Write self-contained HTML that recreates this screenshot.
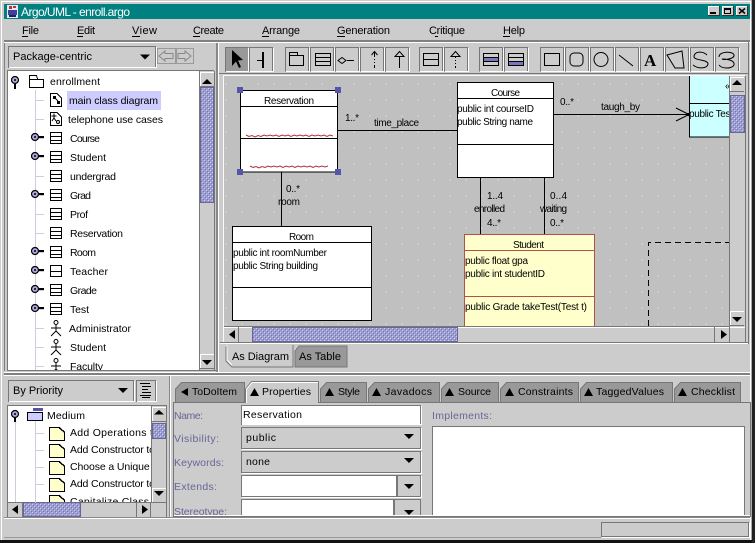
<!DOCTYPE html>
<html><head><meta charset="utf-8"><title>Argo/UML - enroll.argo</title>
<style>
html,body{margin:0;padding:0;background:#ccc;width:755px;height:543px;overflow:hidden}
svg{display:block}
text{font-family:"Liberation Sans",sans-serif;font-size:10.5px;fill:#000}
.c{shape-rendering:crispEdges}
.m{font-size:11px}
.l{fill:#666699}
.d text{font-size:10px}
</style></head><body>
<svg width="755" height="543" viewBox="0 0 755 543" xmlns="http://www.w3.org/2000/svg">
<defs>
<pattern id="hatch" width="4" height="4" patternUnits="userSpaceOnUse"><rect width="4" height="4" fill="#9c9ccf"/><rect x="0" y="0" width="1" height="1" fill="#ccccff"/><rect x="2" y="2" width="1" height="1" fill="#ccccff"/><rect x="1" y="1" width="1" height="1" fill="#7777aa"/><rect x="3" y="3" width="1" height="1" fill="#7777aa"/></pattern>
<pattern id="grid" x="225" y="83" width="16" height="16" patternUnits="userSpaceOnUse"><rect width="16" height="16" fill="#c0c0c0"/><rect x="0" y="0" width="2" height="2" fill="#cbcbcb"/></pattern>
<clipPath id="cd"><rect x="224" y="76" width="505" height="250"/></clipPath>
<clipPath id="ct"><rect x="8" y="72" width="192" height="298"/></clipPath>
<clipPath id="cb"><rect x="8" y="406" width="143" height="96"/></clipPath>
<clipPath id="cs"><rect x="170" y="404" width="580" height="111"/></clipPath>
<g id="btn" class="c"><rect width="24" height="25" fill="#ccc"/><path d="M.5 24V.5H23.5V24.5H.5" fill="none" stroke="#777"/><path d="M1 24.5H24.5V1" fill="none" stroke="#fff"/></g>
<g id="sb" class="c"><rect width="14" height="15" fill="#ccc"/><path d="M.5 15V.5H14" fill="none" stroke="#fff"/><path d="M0 14.5H14" stroke="#777"/></g>
<path id="da" d="M0 0H10L5 5Z"/>
<g id="cls" class="c" fill="none" stroke="#000"><rect x=".5" y=".5" width="11" height="11" fill="#fff"/><path d="M0 4.5H12M0 8.5H12"/></g>
<g id="act" fill="none" stroke="#000"><circle cx="6" cy="2.5" r="2"/><path d="M6 5V11M1 8H11M6 11L1 16M6 11L11 16"/></g>
<g id="key"><circle cx="0" cy="0" r="3.5" fill="#aaaadd" stroke="#000" stroke-width="1.2"/><circle cx="0" cy="0" r="1" fill="#000"/><rect x="4" y="-1" width="5" height="2" fill="#000"/></g>
<g id="note" class="c"><path d="M.5 .5H10.5L15.5 5V13.5H.5Z" fill="#ffffcc" stroke="#000"/><path d="M10 1L15 5" stroke="#000"/></g>
</defs>

<!-- window -->
<rect width="755" height="543" fill="#ccc"/>
<g class="c">
<path d="M.5 543V.5H754" fill="none" stroke="#ccc"/>
<path d="M1 1.5H753M1.5 1V540" stroke="#fff"/>
<rect x="0" y="540" width="755" height="3" fill="#111"/>
<rect x="752" y="0" width="3" height="543" fill="#222"/>
<rect x="750" y="2" width="1" height="538" fill="#fff"/>
<rect x="751" y="0" width="1" height="540" fill="#aaa"/>
<rect x="4" y="4" width="746" height="15" fill="#008080"/>
</g>
<!-- title icon -->
<g class="c"><rect x="7" y="5" width="11" height="13" fill="#e8e8f4"/><rect x="9" y="6" width="3" height="3" fill="#c03030"/><rect x="13" y="6" width="3" height="2" fill="#c03030"/><rect x="8" y="10" width="9" height="5" fill="#4040a0"/><rect x="9" y="15" width="7" height="2" fill="#202060"/></g>
<text x="21" y="16" style="font-size:12px;fill:#fff" textLength="109">Argo/UML - enroll.argo</text>
<!-- window buttons -->
<g class="c">
<rect x="708" y="6" width="12" height="10" fill="#ccc"/><path d="M708 6.5H720M708.5 6V16" stroke="#fff"/><path d="M708 15.5H720M719.5 6V16" stroke="#333"/><rect x="710" y="12" width="6" height="2" fill="#000"/>
<rect x="722" y="6" width="12" height="10" fill="#ccc"/><path d="M722 6.5H734M722.5 6V16" stroke="#fff"/><path d="M722 15.5H734M733.5 6V16" stroke="#333"/><rect x="724.5" y="8.5" width="6" height="5" fill="none" stroke="#000"/><rect x="724" y="8" width="7" height="2" fill="#000"/>
<rect x="736" y="6" width="12" height="10" fill="#ccc"/><path d="M736 6.5H748M736.5 6V16" stroke="#fff"/><path d="M736 15.5H748M747.5 6V16" stroke="#333"/>
</g>
<path d="M739 8.5L745 13.5M745 8.5L739 13.5" stroke="#000" stroke-width="1.5"/>
<!-- menu -->
<text class="m" x="22" y="34" textLength="17">File</text>
<text class="m" x="77" y="34" textLength="18">Edit</text>
<text class="m" x="132" y="34" textLength="25">View</text>
<text class="m" x="193" y="34" textLength="31">Create</text>
<text class="m" x="262" y="34" textLength="38">Arrange</text>
<text class="m" x="337" y="34" textLength="53">Generation</text>
<text class="m" x="429" y="34" textLength="36">Critique</text>
<text class="m" x="503" y="34" textLength="22">Help</text>
<g class="c" fill="#000"><rect x="22" y="36" width="6" height="1"/><rect x="77" y="36" width="6" height="1"/><rect x="132" y="36" width="8" height="1"/><rect x="193" y="36" width="7" height="1"/><rect x="262" y="36" width="7" height="1"/><rect x="337" y="36" width="8" height="1"/><rect x="435" y="36" width="3" height="1"/><rect x="503" y="36" width="7" height="1"/></g>
<g class="c">
<rect x="4" y="40" width="746" height="2" fill="#808080"/>
<rect x="4" y="42" width="746" height="1" fill="#fff"/>
<!-- left pane frame -->
<path d="M4.5 43V371" stroke="#808080"/>
<rect x="216" y="43" width="2" height="329" fill="#888"/>
<rect x="218" y="43" width="1" height="329" fill="#fff"/>
<rect x="4" y="372" width="746" height="1" fill="#fff"/>
<rect x="4" y="373" width="746" height="2" fill="#808080"/>
<rect x="4" y="375" width="746" height="1" fill="#fff"/>
<!-- combo -->
<rect x="8.5" y="46.5" width="147" height="21" fill="#ccc" stroke="#777"/><path d="M9 67.5H156.5V47" fill="none" stroke="#fff"/>
<rect x="157.5" y="48.5" width="18" height="15" fill="#ccc" stroke="#999"/><rect x="176.5" y="48.5" width="17" height="15" fill="#ccc" stroke="#999"/>
</g>
<text x="13" y="60" style="font-size:11px" textLength="79">Package-centric</text>
<use href="#da" x="140" y="54.5"/>
<path d="M159 56L165 51V53.5H173V58.5H165V61Z" fill="none" stroke="#888"/>
<path d="M191 56L185 51V53.5H178V58.5H185V61Z" fill="none" stroke="#888"/>
<!-- tree -->
<g class="c">
<rect x="7" y="71" width="193" height="299" fill="#fff"/>
<path d="M7 70.5H214M7.5 71V370" stroke="#777"/>
<path d="M7 370.5H216" stroke="#777"/>
<path d="M35.5 90V370" stroke="#ccccdd"/>
<path d="M36 100.5H44M36 119.5H44M36 138.5H44M36 157.5H44M36 176.5H44M36 195.5H44M36 214.5H44M36 233.5H44M36 252.5H44M36 271.5H44M36 290.5H44M36 309.5H44M36 328.5H44M36 347.5H44M36 366.5H44" stroke="#ccccdd"/>
<rect x="67" y="91" width="94" height="19" fill="#ccccff"/>
<rect x="29.5" y="79.5" width="14" height="8" fill="#fff" stroke="#000"/><path d="M29.5 79V75.5H36.5L37.5 79" fill="#fff" stroke="#000"/>
</g>
<circle cx="15" cy="80" r="3.5" fill="#aaaadd" stroke="#000" stroke-width="1.2"/><circle cx="15" cy="80" r="1"/><rect x="14" y="84" width="2" height="5"/>
<g clip-path="url(#ct)">
<g class="c">
<path d="M50.5 93.5H57L61.5 98V106.5H50.5Z" fill="#fff" stroke="#000"/><rect x="53" y="96" width="3" height="3" fill="#000"/><rect x="57" y="101" width="3" height="3" fill="#000"/>
<path d="M50.5 112.5H57L61.5 117V125.5H50.5Z" fill="#fff" stroke="#000"/></g>
<path d="M55 98L58 101" stroke="#000"/>
<path d="M54 113.5V118M51.5 116H56.5M54 118L52 121M54 118L56 121" stroke="#000" fill="none"/><circle cx="58" cy="122" r="1.5" fill="none" stroke="#000"/>
<use href="#key" x="35" y="137"/><use href="#key" x="35" y="156"/><use href="#key" x="35" y="194"/><use href="#key" x="35" y="251"/><use href="#key" x="35" y="270"/><use href="#key" x="35" y="289"/><use href="#key" x="35" y="308"/>
<use href="#cls" x="50" y="132"/><use href="#cls" x="50" y="151"/><use href="#cls" x="50" y="170"/><use href="#cls" x="50" y="189"/><use href="#cls" x="50" y="208"/><use href="#cls" x="50" y="227"/><use href="#cls" x="50" y="246"/>
<g class="c" fill="none" stroke="#000"><rect x="50.5" y="265.5" width="11" height="11" fill="#fff"/><path d="M50 271.5H62"/></g>
<use href="#cls" x="50" y="284"/><use href="#cls" x="50" y="303"/>
<use href="#act" x="50" y="320"/><use href="#act" x="50" y="339"/><use href="#act" x="50" y="358"/>
<text x="50" y="85" textLength="50">enrollment</text>
<text x="69" y="104" textLength="89">main class diagram</text>
<text x="68" y="123" textLength="95">telephone use cases</text>
<text x="70" y="142" textLength="30">Course</text>
<text x="70" y="161" textLength="36">Student</text>
<text x="70" y="180" textLength="46">undergrad</text>
<text x="70" y="199" textLength="21">Grad</text>
<text x="70" y="218" textLength="18">Prof</text>
<text x="70" y="237" textLength="53">Reservation</text>
<text x="70" y="256" textLength="26">Room</text>
<text x="70" y="275" textLength="38">Teacher</text>
<text x="70" y="294" textLength="27">Grade</text>
<text x="70" y="313" textLength="19">Test</text>
<text x="69" y="332" textLength="62">Administrator</text>
<text x="70" y="351" textLength="36">Student</text>
<text x="70" y="370" textLength="33">Faculty</text>
</g>
<!-- tree scrollbar -->
<g class="c"><rect x="200" y="72" width="14" height="298" fill="#ccc"/><path d="M199.5 71V370M214.5 71V370" stroke="#777"/>
<use href="#sb" x="200" y="72"/><rect x="200" y="88" width="14" height="115" fill="url(#hatch)"/><rect x="200.5" y="87.5" width="13" height="115" fill="none" stroke="#666699"/>
<use href="#sb" x="200" y="354"/></g>
<path d="M202 84H212L207 79Z"/><use href="#da" x="202" y="360"/>

<!-- toolbar -->
<g class="c"><rect x="225" y="47" width="24" height="25" fill="#999"/><path d="M225.5 72V47.5H248" fill="none" stroke="#777"/><path d="M226 71.5H248.5V48" fill="none" stroke="#fff"/></g>
<use href="#btn" x="249" y="47"/><use href="#btn" x="285" y="47"/><use href="#btn" x="310" y="47"/><use href="#btn" x="335" y="47"/><use href="#btn" x="360" y="47"/><use href="#btn" x="385" y="47"/><use href="#btn" x="419" y="47"/><use href="#btn" x="444" y="47"/><use href="#btn" x="479" y="47"/><use href="#btn" x="504" y="47"/><use href="#btn" x="540" y="47"/><use href="#btn" x="565" y="47"/><use href="#btn" x="590" y="47"/><use href="#btn" x="615" y="47"/><use href="#btn" x="640" y="47"/><use href="#btn" x="665" y="47"/><use href="#btn" x="690" y="47"/><use href="#btn" x="715" y="47"/>
<path d="M232 50L232 66L236 61.5L239 68L241 67L238 60.5L243 60Z" fill="#000"/>
<g class="c"><rect x="484" y="58" width="14" height="3" fill="#7777bb"/><rect x="509" y="62" width="14" height="3" fill="#7777bb"/></g>
<g class="c" fill="none" stroke="#000"><path d="M257 60.5H263M263.5 52V68M262.5 52V68"/>
<path d="M289.5 55.5H303.5V65.5H289.5ZM289.5 55.5V52.5H297.5V55.5"/>
<rect x="315.5" y="53.5" width="15" height="12"/><path d="M315 57.5H331M315 61.5H331"/>
<path d="M347 60.5H354"/>
<rect x="423.5" y="53.5" width="15" height="12"/><path d="M423 59.5H439"/>
<rect x="483.5" y="53.5" width="15" height="12"/><path d="M483 57.5H499M483 61.5H499"/>
<rect x="508.5" y="53.5" width="15" height="12"/><path d="M508 57.5H524M508 61.5H524"/>
<rect x="544.5" y="53.5" width="15" height="12"/>
<path d="M374.5 52V57M374.5 59V60M374.5 62V63M374.5 65V68"/>
<path d="M399.5 57V68"/><path d="M455.5 57V58M455.5 60V61M455.5 63V64M455.5 66V68"/></g>
<g fill="none" stroke="#000">
<path d="M338 60.5L342 57.5L346 60.5L342 63.5Z"/>
<path d="M371.5 55L374.5 51.5L377.5 55"/>
<path d="M395 56.5L399.5 51.5L404 56.5Z"/>
<path d="M451 56.5L455.5 51.5L460 56.5Z"/>
<rect x="570" y="53" width="13" height="13" rx="4"/>
<circle cx="601" cy="59.5" r="7"/>
<path d="M619 55L633 66"/>
<path d="M667 55L682 51L684 68L675 68Z"/>
<path d="M707 55C703 51 695 51 694 56C693 61 708 59 708 64C707 69 698 69 693 65"/>
<path d="M719 57C719 51 733 51 734 55C735 59 724 60 722 59C729 59 735 61 734 65C732 69 722 69 719 65"/>
</g>
<text x="644" y="66" style="font-family:'Liberation Serif',serif;font-weight:bold;font-size:17px">A</text>

<!-- right pane frame -->
<g class="c"><path d="M219 73.5H748" stroke="#777"/><rect x="220" y="74" width="529" height="270" fill="#ccc"/>
<path d="M223.5 75V342M223 75.5H745" stroke="#fff" opacity=".9"/>
<path d="M220 342.5H748" stroke="#777"/><path d="M220 343.5H748" stroke="#fff"/>
<path d="M748.5 42V344" stroke="#777"/></g>
<!-- diagram -->
<rect x="224" y="76" width="505" height="250" fill="url(#grid)" class="c"/>
<g clip-path="url(#cd)" class="d">
<g class="c" stroke="#000" fill="none">
<path d="M337 130.5H457M281.5 172V227M480.5 178V235M544.5 178V235M553 114.5H689"/>
<rect x="240.5" y="90.5" width="97" height="81.5" fill="#fff"/><path d="M241 106.5H337M241 138.5H337"/>
<rect x="457.5" y="82.5" width="96" height="95" fill="#fff"/><path d="M458 98.5H553M458 144.5H553"/>
<rect x="232.5" y="226.5" width="139" height="94" fill="#fff"/><path d="M233 242.5H371M233 287.5H371"/>
<rect x="689.5" y="70.5" width="60" height="66.5" fill="#ccffff"/><path d="M689 103.5H745"/>
<rect x="464.5" y="234.5" width="130" height="100" fill="#ffffcc" stroke="#b05050"/><path d="M465 250.5H594M465 296.5H594" stroke="#b05050"/>
<path d="M648.5 326V242.5H729" stroke-dasharray="6 4"/>
</g>
<path d="M676 108L689 114.5L676 121" fill="none" stroke="#000"/>
<rect x="687" y="113" width="3" height="3"/>
<path d="M246 135l3 1.5 3-1 3 1.5 3-1.5 3 1 3-1.5 3 1 3-1 3 1 3-1 3 1.5 3-1.5 3 1 3-1 3 1.5 3-1.5 3 1 3-1 3 1 3-1 3 1.5 3-1.5 3 1 3-1 3 1 3-1 3 1.5 3-1.5 3 1" fill="none" stroke="#b03040"/>
<path d="M250 166l3 1.5 3-1 3 1.5 3-1.5 3 1 3-1.5 3 1 3-1 3 1 3-1 3 1.5 3-1.5 3 1 3-1 3 1.5 3-1.5 3 1 3-1 3 1 3-1 3 1.5 3-1.5 3 1 3-1 3 1 3-1" fill="none" stroke="#b03040"/>
<text x="264" y="104" textLength="50">Reservation</text>
<text x="345" y="121" textLength="14">1..*</text>
<text x="374" y="126" textLength="45">time_place</text>
<text x="491" y="96" textLength="29">Course</text>
<text x="457" y="112" textLength="77">public int courseID</text>
<text x="457" y="125" textLength="76">public String name</text>
<text x="560" y="105" textLength="14">0..*</text>
<text x="601" y="110" textLength="39">taugh_by</text>
<text x="689" y="117" textLength="44">public Test</text>
<text x="725" y="89">«</text>
<text x="286" y="192" textLength="14">0..*</text>
<text x="278" y="205" textLength="22">room</text>
<text x="289" y="240" textLength="25">Room</text>
<text x="233" y="256" textLength="94">public int roomNumber</text>
<text x="233" y="269" textLength="85">public String building</text>
<text x="487" y="199" textLength="16">1..4</text>
<text x="474" y="212" textLength="31">enrolled</text>
<text x="487" y="226" textLength="14">4..*</text>
<text x="550" y="199" textLength="17">0..4</text>
<text x="540" y="212" textLength="27">waiting</text>
<text x="550" y="226" textLength="14">0..*</text>
<text x="513" y="248" textLength="31">Student</text>
<text x="465" y="264" textLength="63">public float gpa</text>
<text x="465" y="277" textLength="80">public int studentID</text>
<text x="465" y="310" textLength="122">public Grade takeTest(Test t)</text>
</g>
<g class="c" fill="#5555aa"><rect x="237" y="87" width="6" height="6"/><rect x="335" y="87" width="6" height="6"/><rect x="237" y="169" width="6" height="6"/><rect x="335" y="169" width="6" height="6"/></g>
<!-- diagram scrollbars -->
<g class="c">
<path d="M224 326.5H730M729.5 76V326" stroke="#777"/>
<rect x="730" y="76" width="15" height="251" fill="#ccc"/>
<use href="#sb" x="730" y="77"/>
<rect x="730" y="96" width="15" height="37" fill="url(#hatch)"/><rect x="730.5" y="95.5" width="14" height="37" fill="none" stroke="#666699"/>
<use href="#sb" x="730" y="311"/>
<rect x="224" y="327" width="521" height="15" fill="#ccc"/>
<path d="M224 327.5H745" stroke="#fff"/>
<rect x="252.5" y="327.5" width="205" height="14" fill="url(#hatch)" stroke="#666699"/>
<path d="M238.5 327V342M714.5 327V342M729.5 327V342" stroke="#777"/>
<path d="M745.5 76V342" stroke="#777"/>
</g>
<path d="M732 85H742L737 80Z"/><use href="#da" x="732" y="317"/>
<path d="M235 330V339L229 334.5Z"/><path d="M721 330V339L727 334.5Z"/>
<!-- as diagram tabs -->
<path d="M228 347H226V361L232 367H293V345" fill="#ccc" stroke="#777"/>
<path d="M227 345V360L232 365" fill="none" stroke="#fff"/>
<path d="M295 367V351L299 346H347V367Z" fill="#999" stroke="#777" class="c"/>
<text x="232" y="360" style="font-size:11px" textLength="57">As Diagram</text>
<text x="299" y="360" style="font-size:11px" textLength="42">As Table</text>

<!-- todo pane -->
<g class="c">
<rect x="8.5" y="380.5" width="125" height="21" fill="#ccc" stroke="#777"/><path d="M9 401.5H134.5V381" fill="none" stroke="#fff"/>
<rect x="136.5" y="380.5" width="19" height="21" fill="#ccc" stroke="#777"/><path d="M137 401.5H156.5V381" fill="none" stroke="#fff"/>
<path d="M140 383.5H150M142 386.5H151M142 389.5H148M142 392.5H151M140 395.5H151M142 397.5H150" stroke="#000"/>
<rect x="7" y="406" width="145" height="97" fill="#fff"/>
<path d="M7 405.5H167M7.5 405V517M7 517.5H167M166.5 405V517" stroke="#777"/>
<rect x="152" y="406" width="14" height="97" fill="#ccc"/>
<path d="M151.5 406V503" stroke="#777"/>
<use href="#sb" x="152" y="407"/>
<rect x="152.5" y="423.5" width="13" height="15" fill="url(#hatch)" stroke="#666699"/>
<use href="#sb" x="152" y="488"/>
<rect x="8" y="502" width="158" height="15" fill="#ccc"/>
<path d="M8 502.5H166M22.5 502V517M136.5 502V517M150.5 502V517" stroke="#777"/>
<rect x="23.5" y="502.5" width="57" height="14" fill="url(#hatch)" stroke="#666699"/>
<path d="M15.5 410V502" stroke="#ccccdd"/>
<path d="M35.5 420V503M36 433.5H44M36 450.5H44M36 467.5H44M36 484.5H44" stroke="#ccccdd"/>
<path d="M27.5 412.5H42.5V420.5H27.5Z" fill="#ccccff" stroke="#000"/><rect x="33" y="408" width="10" height="3" fill="#5555aa"/>
</g>
<circle cx="15" cy="414" r="3.5" fill="#aaaadd" stroke="#000" stroke-width="1.2"/><circle cx="15" cy="414" r="1"/><rect x="14" y="418" width="2" height="4"/>
<g clip-path="url(#cb)">
<use href="#note" x="49" y="427"/><use href="#note" x="49" y="444"/><use href="#note" x="49" y="461"/><use href="#note" x="49" y="478"/><use href="#note" x="49" y="495"/>
<text x="47" y="419" textLength="38">Medium</text>
<text x="70" y="436" textLength="89">Add Operations to</text>
<text x="70" y="453" textLength="85">Add Constructor to</text>
<text x="70" y="470" textLength="90">Choose a Unique N</text>
<text x="70" y="487" textLength="85">Add Constructor to</text>
<text x="70" y="505" textLength="90">Capitalize Class N</text>
</g>
<path d="M154 414.5H164L159 410Z"/><use href="#da" x="154" y="491"/>
<path d="M18 505V514L12 509.5Z"/><path d="M142 505V514L148 509.5Z"/>
<text x="13" y="394" style="font-size:11px" textLength="50">By Priority</text>
<use href="#da" x="118" y="388"/>
<rect x="169" y="376" width="1" height="142" fill="#888" class="c"/><rect x="170" y="376" width="1" height="142" fill="#fff" class="c"/>

<!-- details tabs -->
<g class="c"><path d="M173.5 402.5H750.5V516.5H173.5Z" fill="#ccc" stroke="#777"/><path d="M174 515.5H750" stroke="#fff"/></g>
<g stroke="#777" fill="#999">
<path d="M175.5 402V389L181.5 382.5H244.5V402"/>
<path d="M320.5 402V389L326.5 382.5H366.5V402"/>
<path d="M368.5 402V389L374.5 382.5H439.5V402"/>
<path d="M441.5 402V389L447.5 382.5H498.5V402"/>
<path d="M500.5 402V389L506.5 382.5H578.5V402"/>
<path d="M580.5 402V389L586.5 382.5H672.5V402"/>
<path d="M674.5 402V389L680.5 382.5H740.5V402"/>
<path d="M245.5 403V389L251.5 381.5H318.5V403" fill="#ccc"/>
</g>
<path d="M246.5 403V389L252 382.5H318" fill="none" stroke="#fff"/>
<g>
<path d="M181 392L188 388V396Z"/>
<path d="M250 396L254.5 388L259 396Z"/><path d="M325 396L329.5 388L334 396Z"/><path d="M372 396L376.5 388L381 396Z"/><path d="M445 396L449.5 388L454 396Z"/><path d="M505 396L509.5 388L514 396Z"/><path d="M584 396L588.5 388L593 396Z"/><path d="M678 396L682.5 388L687 396Z"/>
</g>
<g>
<text x="192" y="395" textLength="45">ToDoItem</text>
<text x="262" y="395" textLength="49">Properties</text>
<text x="338" y="395" textLength="22">Style</text>
<text x="385" y="395" textLength="47">Javadocs</text>
<text x="458" y="395" textLength="33">Source</text>
<text x="518" y="395" textLength="55">Constraints</text>
<text x="596" y="395" textLength="68">TaggedValues</text>
<text x="691" y="395" textLength="44">Checklist</text>
</g>
<!-- property fields -->
<g clip-path="url(#cs)">
<g class="c">
<rect x="241.5" y="405.5" width="179" height="19" fill="#fff" stroke="#777"/><path d="M242 424.5H421.5V406" fill="none" stroke="#fff"/>
<rect x="241.5" y="427.5" width="179" height="21" fill="#ccc" stroke="#777"/><path d="M242 449.5H421.5V428" fill="none" stroke="#fff"/>
<rect x="241.5" y="451.5" width="179" height="21" fill="#ccc" stroke="#777"/><path d="M242 473.5H421.5V452" fill="none" stroke="#fff"/>
<rect x="241.5" y="475.5" width="155" height="21" fill="#fff" stroke="#777"/><rect x="397.5" y="475.5" width="23" height="21" fill="#ccc" stroke="#777"/><path d="M242 497.5H421.5V476" fill="none" stroke="#fff"/>
<rect x="241.5" y="499.5" width="152" height="21" fill="#fff" stroke="#777"/><rect x="394.5" y="499.5" width="26" height="21" fill="#ccc" stroke="#777"/>
<rect x="432.5" y="426.5" width="312" height="95" fill="#fff" stroke="#777"/>
</g>
<use href="#da" x="404" y="434"/><use href="#da" x="404" y="458"/><use href="#da" x="404" y="484"/><use href="#da" x="404" y="510"/>
<text x="243" y="418" textLength="59">Reservation</text>
<text x="246" y="441" textLength="30">public</text>
<text x="246" y="465" textLength="24">none</text>
<g>
<text class="l" x="174" y="419" textLength="29">Name:</text>
<text class="l" x="174" y="442" textLength="45">Visibility:</text>
<text class="l" x="174" y="466" textLength="50">Keywords:</text>
<text class="l" x="174" y="490" textLength="43">Extends:</text>
<text class="l" x="174" y="515" textLength="53">Stereotype:</text>
<text class="l" x="432" y="419" textLength="60">Implements:</text>
</g>
</g>
<!-- status -->
<g class="c">
<rect x="4" y="517" width="746" height="1" fill="#888"/>
<rect x="4" y="518" width="746" height="1" fill="#fff"/>
<rect x="601.5" y="522.5" width="147" height="14" fill="#ccc" stroke="#777"/>
<path d="M602 537.5H749.5V523" fill="none" stroke="#fff"/>
<rect x="4" y="537" width="597" height="1" fill="#999"/>
</g>
</svg>
</body></html>
